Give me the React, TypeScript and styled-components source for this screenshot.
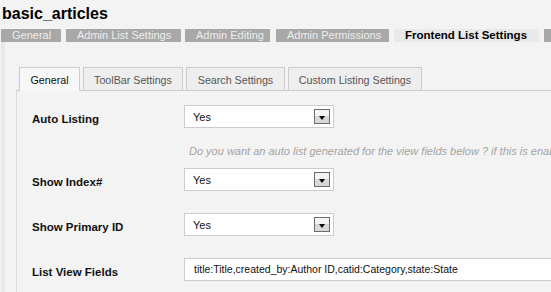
import * as React from 'react';
import styled, { createGlobalStyle } from 'styled-components';

const GlobalStyle = createGlobalStyle`
  html, body {
    margin: 0;
    padding: 0;
    background: #f3f3f3;
    overflow: hidden;
  }
  body {
    font-family: "Liberation Sans", Arial, Helvetica, sans-serif;
  }
`;

const Page = styled.div`
  width: 551px;
  height: 292px;
  overflow: hidden;
  white-space: nowrap;
`;

const Title = styled.h1`
  margin: 0;
  padding: 5px 0 0 2px;
  height: 18px;
  font-size: 16px;
  line-height: 18px;
  font-weight: bold;
  color: #000;
`;

const MainTabs = styled.div`
  display: flex;
  margin: 6px 0 0 1px;
  height: 13px;
`;

const MainTab = styled.div<{ $w: number; $gap: number; $active?: boolean }>`
  flex: none;
  box-sizing: border-box;
  width: ${p => p.$w}px;
  margin-right: ${p => p.$gap}px;
  padding-left: 11px;
  background: ${p => (p.$active ? '#e9e9e9' : '#a8a8a8')};
  color: ${p => (p.$active ? '#000' : '#eeeeee')};
  font-size: ${p => (p.$active ? '11.5px' : '11px')};
  font-weight: ${p => (p.$active ? 'bold' : 'normal')};
  line-height: 13px;
`;

const Panel = styled.div`
  margin-left: 1px;
  border-left: 4px solid #e8e8e8;
  padding: 25px 0 0 11px;
  height: 260px;
`;

const SubTabs = styled.div`
  display: flex;
  align-items: flex-start;
  gap: 3px;
  height: 23px;
  padding-left: 3px;
  border-bottom: 1px solid #cccccc;
`;

const SubTab = styled.div<{ $w: number; $active?: boolean }>`
  flex: none;
  box-sizing: border-box;
  width: ${p => p.$w}px;
  height: ${p => (p.$active ? 24 : 23)}px;
  padding-top: 1px;
  border: 1px solid #cccccc;
  border-bottom: none;
  background: ${p => (p.$active ? '#f7f7f7' : '#eeeeee')};
  color: ${p => (p.$active ? '#111' : '#555')};
  font-size: 10.7px;
  line-height: 22px;
  text-align: center;
`;

const Content = styled.div`
  border-left: 1px solid #dcdcdc;
  padding: 14px 0 0 15px;
  height: 200px;
`;

const Row = styled.div`
  display: flex;
  align-items: flex-start;
  height: 23px;
  margin-bottom: 22px;
`;

const Label = styled.div`
  flex: none;
  width: 152px;
  padding-top: 6px;
  font-size: 11.5px;
  line-height: 16px;
  font-weight: bold;
  color: #111;
`;

const Select = styled.div`
  flex: none;
  box-sizing: border-box;
  width: 150px;
  height: 23px;
  display: flex;
  align-items: center;
  justify-content: space-between;
  padding: 0 3px 0 8px;
  border: 1px solid #cccccc;
  background: #fff;
  font-size: 11px;
  color: #111;
`;

const Arrow = styled.span`
  box-sizing: border-box;
  width: 16px;
  height: 15px;
  display: flex;
  align-items: flex-end;
  justify-content: center;
  padding-bottom: 3px;
  border: 1px solid #6b6b6b;
  background: linear-gradient(#f4f4f4 0 45%, #d8d8d8 45%);

  &::after {
    content: '';
    border-left: 3.5px solid transparent;
    border-right: 3.5px solid transparent;
    border-top: 4px solid #000;
  }
`;

const Help = styled.div`
  margin: -8px 0 8px 157px;
  height: 18px;
  font-size: 11px;
  line-height: 18px;
  font-style: italic;
  color: #a3a3a3;
`;

const TextInput = styled.div`
  flex: none;
  box-sizing: border-box;
  width: 420px;
  height: 23px;
  padding-left: 9px;
  border: 1px solid #cccccc;
  background: #fff;
  font-size: 10.5px;
  line-height: 21px;
  color: #111;
`;

const mainTabs = [
  { label: 'General', w: 60, gap: 5 },
  { label: 'Admin List Settings', w: 115, gap: 4 },
  { label: 'Admin Editing', w: 85, gap: 6 },
  { label: 'Admin Permissions', w: 113, gap: 5 },
  { label: 'Frontend List Settings', w: 145, gap: 5, active: true },
  { label: 'Frontend Editing', w: 110, gap: 5 },
];

const subTabs = [
  { label: 'General', w: 61, active: true },
  { label: 'ToolBar Settings', w: 100 },
  { label: 'Search Settings', w: 99 },
  { label: 'Custom Listing Settings', w: 134 },
];

const YesSelect = () => (
  <Select>
    <span>Yes</span>
    <Arrow />
  </Select>
);

const App = () => (
  <Page>
    <GlobalStyle />
    <Title>basic_articles</Title>
    <MainTabs>
      {mainTabs.map(t => (
        <MainTab key={t.label} $w={t.w} $gap={t.gap} $active={t.active}>
          {t.label}
        </MainTab>
      ))}
    </MainTabs>
    <Panel>
      <SubTabs>
        {subTabs.map(t => (
          <SubTab key={t.label} $w={t.w} $active={t.active}>
            {t.label}
          </SubTab>
        ))}
      </SubTabs>
      <Content>
        <Row>
          <Label>Auto Listing</Label>
          <YesSelect />
        </Row>
        <Help>
          Do you want an auto list generated for the view fields below ? if this is enabled the list is built for you
        </Help>
        <Row>
          <Label>Show Index#</Label>
          <YesSelect />
        </Row>
        <Row>
          <Label>Show Primary ID</Label>
          <YesSelect />
        </Row>
        <Row>
          <Label>List View Fields</Label>
          <TextInput>title:Title,created_by:Author ID,catid:Category,state:State</TextInput>
        </Row>
      </Content>
    </Panel>
  </Page>
);

export default () => {
  return <App />;
};
